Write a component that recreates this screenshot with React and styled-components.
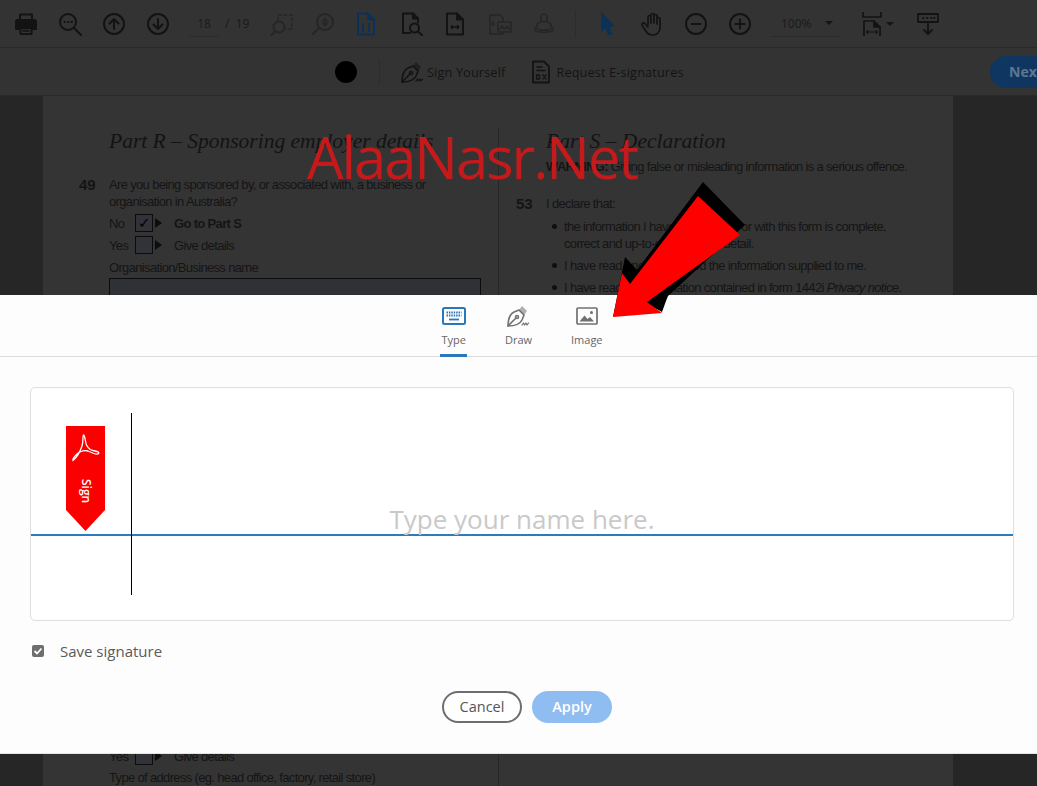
import React from "react"
import styled, { createGlobalStyle } from "styled-components"

const Global = createGlobalStyle`
  html, body { margin: 0; padding: 0; background: #262626; }
  * { box-sizing: border-box; }
`
const Screen = styled.div`
  position: relative;
  width: 1037px;
  height: 786px;
  overflow: hidden;
  display: flex;
  flex-direction: column;
  background: #262626;
  font-family: "Open Sans", "Liberation Sans", sans-serif;
`
const Toolbar = styled.div`
  height: 48px;
  flex: none;
  display: flex;
  align-items: center;
  padding-left: 4px;
  background: #333;
  border-bottom: 1px solid #2a2a2a;
  color: #111;
`
const Tool = styled.div`
  width: ${p => p.$w || 44}px;
  height: 32px;
  flex: none;
  display: flex;
  align-items: center;
  justify-content: center;
  color: ${p => p.$color || "#131313"};
  opacity: ${p => (p.$faded ? 0.4 : 1)};
`
const PageGroup = styled.div`
  width: 80px;
  flex: none;
  display: flex;
  align-items: center;
  padding-left: 9px;
  font-size: 12px;
  color: #1a1a1a;
`
const PageBox = styled.div`
  width: 30px;
  height: 26px;
  line-height: 26px;
  text-align: center;
  border-bottom: 1px solid #2b2b2b;
  margin-right: 6px;
`
const ToolSep = styled.div`
  width: 1px;
  height: 28px;
  margin: 0 10px 0 9px;
  background: #2c2c2c;
  flex: none;
`
const ZoomBox = styled.div`
  width: 70px;
  height: 27px;
  margin: 0 17px 0 9px;
  flex: none;
  display: flex;
  align-items: center;
  justify-content: space-between;
  padding-left: 10px;
  padding-right: 8px;
  font-size: 12px;
  color: #1a1a1a;
  border-bottom: 1px solid #2b2b2b;
`
const Caret = styled.span`
  width: 0;
  height: 0;
  border-left: 4px solid transparent;
  border-right: 4px solid transparent;
  border-top: 4px solid #151515;
  flex: none;
`
const SignBar = styled.div`
  height: 48px;
  flex: none;
  display: flex;
  align-items: center;
  padding-left: 335px;
  background: #333;
  border-bottom: 1px solid #2a2a2a;
  color: #131313;
  font-size: 12.7px;
`
const Dot = styled.div`
  width: 22px;
  height: 22px;
  border-radius: 50%;
  background: #000;
  flex: none;
`
const BarSep = styled.div`
  width: 1px;
  height: 26px;
  margin: 0 20px 0 22px;
  background: #2c2c2c;
  flex: none;
`
const BarAction = styled.div`
  display: flex;
  align-items: center;
  gap: 3px;
  margin-right: 24px;
  white-space: nowrap;
  letter-spacing: .15px;
`
const NextButton = styled.div`
  margin-left: auto;
  margin-right: -32px;
  width: 79px;
  height: 32px;
  line-height: 32px;
  padding-left: 19px;
  border-radius: 16px;
  background: #0f3660;
  color: #5f7690;
  font-weight: 700;
  font-size: 14px;
  flex: none;
`
const PageArea = styled.div`
  flex: 1;
  display: flex;
  padding-left: 43px;
  min-height: 0;
`
const Paper = styled.div`
  width: 910px;
  height: 100%;
  flex: none;
  background: #343434;
  display: grid;
  grid-template-columns: 456px 1fr;
  color: #141414;
  font-family: "Liberation Sans", sans-serif;
  font-size: 13px;
  letter-spacing: -.66px;
  line-height: 17px;
`
const LeftCol = styled.div`
  border-right: 1px solid #272727;
  margin-top: 32px;
  padding: 0 17px 0 66px;
`
const RightCol = styled.div`
  margin-top: 32px;
  padding: 0 0 0 47px;
`
const PartTitle = styled.div`
  font-family: "Liberation Serif", serif;
  font-style: italic;
  font-size: 21.5px;
  letter-spacing: 0;
  line-height: 26px;
  color: #131313;
  white-space: nowrap;
`
const Question = styled.div`
  position: relative;
  margin-top: ${p => p.$top || 0}px;
  white-space: nowrap;
`
const QNum = styled.b`
  position: absolute;
  left: ${p => p.$left}px;
  top: 0;
  font-size: 15px;
  letter-spacing: 0;
`
const ChoiceRow = styled.div`
  display: flex;
  align-items: center;
  height: 22px;
  margin-top: ${p => p.$top || 0}px;
  white-space: nowrap;
`
const ChoiceLabel = styled.span`
  width: 26px;
`
const CheckBox = styled.span`
  width: 18px;
  height: 18px;
  border: 1px solid #0c0c0c;
  background: #323338;
  display: flex;
  align-items: center;
  justify-content: center;
  font-size: 15px;
  color: #000;
  font-family: "DejaVu Sans", sans-serif;
`
const Play = styled.span`
  width: 0;
  height: 0;
  margin: 0 12px 0 2px;
  border-top: 5px solid transparent;
  border-bottom: 5px solid transparent;
  border-left: 7px solid #0d0d0d;
`
const Field = styled.div`
  height: 467px;
  margin-top: 2px;
  border: 1px solid #0c0c0c;
  background: #2f3136;
`
const Warning = styled.div`
  margin-top: 4px;
  white-space: nowrap;
`
const Bullets = styled.ul`
  list-style: none;
  margin: 6px 0 0;
  padding: 0 0 0 18px;
`
const BulletItem = styled.li`
  position: relative;
  margin-bottom: 5px;
  white-space: nowrap;
  &:before {
    content: "";
    position: absolute;
    left: -12px;
    top: 6px;
    width: 5px;
    height: 5px;
    border-radius: 50%;
    background: #0f0f0f;
  }
`
const Watermark = styled.div`
  position: absolute;
  left: 307px;
  top: 118px;
  font-size: 58px;
  line-height: 78px;
  color: #c41a1c;
  letter-spacing: -2.1px;
  white-space: nowrap;
`
const Dialog = styled.div`
  position: absolute;
  left: 0;
  right: 0;
  top: 295px;
  height: 459px;
  background: #fdfdfd;
  display: flex;
  flex-direction: column;
  border-bottom: 1px solid #e4e4e4;
`
const Tabs = styled.div`
  height: 62px;
  flex: none;
  display: flex;
  justify-content: center;
  gap: 37px;
  padding-left: 7px;
  border-bottom: 1px solid #dcdcdc;
`
const Tab = styled.div`
  height: 62px;
  padding: 9px 1px 0;
  min-width: 26px;
  display: flex;
  flex-direction: column;
  align-items: center;
  gap: 4px;
  font-size: 11px;
  line-height: 15px;
  color: ${p => (p.$active ? "#2a78bb" : "#707070")};
  border-bottom: 3px solid ${p => (p.$active ? "#2a78bb" : "transparent")};
`
const TabIcon = styled.span`
  height: 24px;
  display: flex;
  align-items: center;
  justify-content: center;
`
const TabLabel = styled.span`
  color: #666;
`
const DialogBody = styled.div`
  flex: 1;
  padding: 30px 23px 0 30px;
  display: flex;
  flex-direction: column;
`
const SignBox = styled.div`
  position: relative;
  height: 234px;
  flex: none;
  background: #fff;
  border: 1px solid #dedede;
  border-radius: 5px;
`
const TypeArea = styled.div`
  height: 148px;
  display: flex;
  align-items: flex-end;
  justify-content: center;
  border-bottom: 2px solid #2b7cbd;
  font-size: 26px;
  line-height: 32px;
  color: #c9c9c9;
`
const Placeholder = styled.span`
  margin-bottom: -1px;
`
const Caretline = styled.div`
  position: absolute;
  left: 100px;
  top: 25px;
  width: 1px;
  height: 182px;
  background: #000;
`
const SignTag = styled.div`
  position: absolute;
  left: 35px;
  top: 38px;
  width: 39px;
  height: 105px;
  background: #fa0000;
  clip-path: polygon(0 0, 100% 0, 100% 80%, 50% 100%, 0 80%);
  display: flex;
  flex-direction: column;
  align-items: center;
  padding-top: 8px;
  color: #fff;
`
const TagText = styled.span`
  writing-mode: vertical-rl;
  font-size: 12px;
  font-weight: 600;
  line-height: 14px;
  margin-top: 15px;
`
const SaveRow = styled.div`
  margin-top: 20px;
  display: flex;
  align-items: center;
  padding-left: 2px;
  height: 20px;
  font-size: 15px;
  color: #5a5a5a;
`
const SaveBox = styled.span`
  width: 12px;
  height: 12px;
  margin-right: 16px;
  border-radius: 2px;
  background: #6e6e6e;
  display: flex;
  align-items: center;
  justify-content: center;
`
const Buttons = styled.div`
  margin-top: 30px;
  display: flex;
  justify-content: center;
  gap: 10px;
  padding-left: 10px;
`
const PillButton = styled.div`
  width: 80px;
  height: 32px;
  border-radius: 16px;
  display: flex;
  align-items: center;
  justify-content: center;
  padding-bottom: 1px;
  font-size: 14.5px;
  font-weight: ${p => (p.$primary ? 600 : 400)};
  color: ${p => (p.$primary ? "#fff" : "#555")};
  background: ${p => (p.$primary ? "#8fbdf1" : "#fff")};
  border: 2px solid ${p => (p.$primary ? "#8fbdf1" : "#6e6e6e")};
`
const ArrowArt = styled.svg`
  position: absolute;
  left: 0;
  top: 0;
  pointer-events: none;
`

const Ico = ({ size = 24, children, fill = "none", sw = 2 }) => (
  <svg width={size} height={size} viewBox="0 0 24 24" fill={fill} stroke="currentColor" strokeWidth={sw} strokeLinecap="round" strokeLinejoin="round">
    {children}
  </svg>
)

const PrintIcon = () => (
  <Ico>
    <path d="M6 8V2.5h12V8" />
    <path d="M6 17H2V9.5a1.5 1.5 0 0 1 1.5-1.5h17A1.5 1.5 0 0 1 22 9.5V17h-4" fill="currentColor" />
    <path d="M6.5 13.5h11V22h-11z" />
    <path d="M9 16.5h6M9 19h6" strokeWidth="1.3" />
  </Ico>
)
const LensDots = () => (
  <Ico>
    <circle cx="10" cy="10" r="8" />
    <path d="M16 16l7 7" />
    <path d="M6.5 10h.5M10 10h.5M13.5 10h.5" />
  </Ico>
)
const Circled = ({ d }) => (
  <Ico>
    <circle cx="12" cy="12" r="10" />
    <path d={d} />
  </Ico>
)
const MarqueeZoom = () => (
  <Ico>
    <path d="M8 8V3h14v14h-6" strokeDasharray="3 2.5" strokeWidth="1.4" />
    <circle cx="9" cy="15" r="5.5" />
    <path d="M5 19.5L1.5 23" />
  </Ico>
)
const DynamicZoom = () => (
  <Ico>
    <circle cx="14" cy="10" r="8" />
    <path d="M8 16l-6 6" />
    <path d="M10.5 10h7M14 6.5l-2 2h4zM14 13.5l-2-2h4z" strokeWidth="1.2" />
  </Ico>
)
const ActualSize = () => (
  <Ico>
    <path d="M4 1.5h10l6 6v15H4z" />
    <path d="M14 1.5v6h6" fill="currentColor" />
    <path d="M9 12v7M15 12v7" />
  </Ico>
)
const FindPage = () => (
  <Ico>
    <path d="M11 21H4V1.5h10l5 5v4" />
    <path d="M14 1.5v5h5" fill="currentColor" />
    <circle cx="15.5" cy="16" r="4.5" />
    <path d="M19 19.5l4 3.5" />
  </Ico>
)
const FitWidth = () => (
  <Ico>
    <path d="M4 1.5h10l6 6v15H4z" />
    <path d="M14 1.5v6h6" fill="currentColor" />
    <path d="M8 15h8M8 15l1.5-1.5M8 15l1.5 1.5M16 15l-1.5-1.5M16 15l-1.5 1.5" strokeWidth="1.3" />
  </Ico>
)
const TwoPages = () => (
  <Ico sw={1.5}>
    <path d="M2 3h10l3 3v16H2z" />
    <path d="M10 10h13v10H10z" fill="#333" />
    <path d="M12 17l2-3 2 3M17 17l2-3 2 3M4 13l1-3 1 3" />
  </Ico>
)
const Stamp = () => (
  <Ico sw={1.6}>
    <path d="M9 9V5a3 3 0 0 1 6 0v4" />
    <path d="M6 11c2-2 10-2 12 0l3 7c0 3-18 3-18 0z" />
    <path d="M5 17c3 1.5 11 1.5 14 0" />
  </Ico>
)
const Pointer = () => (
  <Ico fill="currentColor" sw={1}>
    <path d="M6 1l12 13-5.5.4L16 22l-3.5 1-3-7.5L6 19z" />
  </Ico>
)
const Hand = () => (
  <Ico sw={1.7}>
    <path d="M8 13V5a1.5 1.5 0 0 1 3 0v6M11 11V3a1.5 1.5 0 0 1 3 0v8M14 11V4a1.5 1.5 0 0 1 3 0v8M17 12V7a1.5 1.5 0 0 1 3 0v9c0 4-3 7-7 7h-1c-3 0-5-2-6.5-4.5L2 13c-.7-1.3 1.5-2.8 2.7-1.5L8 15" />
  </Ico>
)
const FitPage = () => (
  <Ico sw={1.7}>
    <path d="M3 0v5h18V0" />
    <path d="M4 24V9h10l6 6v9" />
    <path d="M14 9v6h6" fill="currentColor" />
    <path d="M6.5 20h11M6.5 20l1.5-1.5M6.5 20l1.5 1.5M17.5 20l-1.5-1.5M17.5 20l-1.5 1.5" strokeWidth="1.1" />
  </Ico>
)
const RulerDown = () => (
  <Ico sw={1.8}>
    <path d="M2 2h20v8H2z" />
    <path d="M7 6h.5M11 6h.5M15 6h.5M18 6h.5" />
    <path d="M12 12v10M8 18l4 4 4-4" />
  </Ico>
)
const Pen = ({ size = 24 }) => (
  <Ico size={size} sw={1.6}>
    <path d="M2 22c0-6 2-12 6-14l5-2 5 5-2 5c-2 4-7 6-14 6z" />
    <path d="M2 22l8-8" />
    <circle cx="11" cy="13" r="1.5" />
    <path d="M13 6l3-4 5 5-3 4" fill="currentColor" stroke="none" opacity=".55" />
    <path d="M16 21l1.5-2 1 2 1.5-2 1 2 1.5-2" strokeWidth="1.2" />
  </Ico>
)
const Form = () => (
  <Ico sw={1.8}>
    <path d="M4 1.5h11l5 5v16H4z" />
    <path d="M8 7h5M8 10.5h8" strokeWidth="1.5" />
    <path d="M7.5 15h3v4h-3zM14 15l3 4M17 15l-3 4" strokeWidth="1.3" />
  </Ico>
)
const Keyboard = () => (
  <svg width="24" height="18" viewBox="0 0 24 18" fill="none">
    <rect x="1" y="1" width="22" height="16" rx="1.5" stroke="currentColor" strokeWidth="2" />
    <path d="M4.5 5.5h15M4.5 8.5h15" stroke="currentColor" strokeWidth="1.8" strokeDasharray="1.5 .9" />
    <path d="M7 12.5h10" stroke="currentColor" strokeWidth="1.8" />
  </svg>
)
const ImageIco = () => (
  <svg width="22" height="20" viewBox="0 0 22 20" fill="none">
    <rect x="1" y="2" width="20" height="16" rx="1" stroke="currentColor" strokeWidth="1.7" />
    <path d="M3.5 15.5l5-6 3 3.5 2.5-2 4 4.5z" fill="currentColor" />
    <circle cx="15.5" cy="6.5" r="1.5" fill="currentColor" />
  </svg>
)
const AcrobatLogo = () => (
  <svg width="30" height="30" viewBox="0 0 30 30" fill="none" stroke="#fff" strokeWidth="1.3">
    <path d="M2 26.5C5 24 9 18 11 12C12.500 8 11.500 1 12.500 1C14 1 14 7 15.500 11C17 14 20 16.500 24 17C27 17.500 28.500 18.500 27.500 19.500C26 21 21 19 17 17C13 16 8 18 5 21C3 23 1.500 25.500 2 26.500z" />
  </svg>
)
const ArrowShape = () => (
  <ArrowArt width="1037" height="786" viewBox="0 0 1037 786">
    <polygon fill="#000" points="625,257 637,270 703,182 745,225 668,296 666,301 662,312 640,300 613,317" />
    <polygon fill="#fe0000" points="613,317 622,273 630,284 698,196 740,235 647,302 662,313" />
  </ArrowArt>
)

export default function App() {
  return (
    <Screen>
      <Global />
      <Toolbar>
        <Tool><PrintIcon /></Tool>
        <Tool><LensDots /></Tool>
        <Tool><Circled d="M12 17V7M7.5 11.5L12 7l4.5 4.5" /></Tool>
        <Tool><Circled d="M12 7v10M7.5 12.5L12 17l4.5-4.5" /></Tool>
        <PageGroup><PageBox>18</PageBox>/&nbsp;&nbsp;19</PageGroup>
        <Tool $faded><MarqueeZoom /></Tool>
        <Tool $w={38} $faded><DynamicZoom /></Tool>
        <Tool $w={48} $color="#0c3157"><ActualSize /></Tool>
        <Tool $w={42}><FindPage /></Tool>
        <Tool $w={46}><FitWidth /></Tool>
        <Tool $faded><TwoPages /></Tool>
        <Tool $faded><Stamp /></Tool>
        <ToolSep />
        <Tool $color="#0c3157"><Pointer /></Tool>
        <Tool><Hand /></Tool>
        <Tool><Circled d="M7.5 12h9" /></Tool>
        <Tool><Circled d="M7.5 12h9M12 7.5v9" /></Tool>
        <ZoomBox>100%<Caret /></ZoomBox>
        <Tool $w={28}><FitPage /></Tool>
        <Caret />
        <Tool $w={68}><RulerDown /></Tool>
      </Toolbar>
      <SignBar>
        <Dot />
        <BarSep />
        <BarAction><Pen />Sign Yourself</BarAction>
        <BarAction><Form />Request E-signatures</BarAction>
        <NextButton>Next</NextButton>
      </SignBar>
      <PageArea>
        <Paper>
          <LeftCol>
            <PartTitle>Part R – Sponsoring employer details</PartTitle>
            <Question $top={22}>
              <QNum $left={-30}>49</QNum>
              Are you being sponsored by, or associated with, a business or<br />organisation in Australia?
            </Question>
            <ChoiceRow $top={2}><ChoiceLabel>No</ChoiceLabel><CheckBox>✓</CheckBox><Play /><b>Go to Part S</b></ChoiceRow>
            <ChoiceRow><ChoiceLabel>Yes</ChoiceLabel><CheckBox /><Play />Give details</ChoiceRow>
            <Question $top={3}>Organisation/Business name</Question>
            <Field />
            <ChoiceRow><ChoiceLabel>Yes</ChoiceLabel><CheckBox /><Play />Give details</ChoiceRow>
            <Question $top={2}>Type of address (eg. head office, factory, retail store)</Question>
          </LeftCol>
          <RightCol>
            <PartTitle>Part S – Declaration</PartTitle>
            <Warning><b>WARNING:</b> Giving false or misleading information is a serious offence.</Warning>
            <Question $top={20}>
              <QNum $left={-30}>53</QNum>
              I declare that:
            </Question>
            <Bullets>
              <BulletItem>the information I have provided on or with this form is complete,<br />correct and up-to-date in every detail.</BulletItem>
              <BulletItem>I have read and understood the information supplied to me.</BulletItem>
              <BulletItem>I have read the information contained in form 1442i <i>Privacy notice</i>.</BulletItem>
            </Bullets>
          </RightCol>
        </Paper>
      </PageArea>
      <Watermark>AlaaNasr.Net</Watermark>
      <Dialog>
        <Tabs>
          <Tab $active><TabIcon><Keyboard /></TabIcon><TabLabel>Type</TabLabel></Tab>
          <Tab><TabIcon><Pen /></TabIcon><TabLabel>Draw</TabLabel></Tab>
          <Tab><TabIcon><ImageIco /></TabIcon><TabLabel>Image</TabLabel></Tab>
        </Tabs>
        <DialogBody>
          <SignBox>
            <TypeArea><Placeholder>Type your name here.</Placeholder></TypeArea>
            <Caretline />
            <SignTag><AcrobatLogo /><TagText>Sign</TagText></SignTag>
          </SignBox>
          <SaveRow>
            <SaveBox>
              <svg width="10" height="10" viewBox="0 0 10 10" fill="none" stroke="#fff" strokeWidth="1.8"><path d="M1.5 5l2.5 2.5 4.5-5" /></svg>
            </SaveBox>
            Save signature
          </SaveRow>
          <Buttons>
            <PillButton>Cancel</PillButton>
            <PillButton $primary>Apply</PillButton>
          </Buttons>
        </DialogBody>
      </Dialog>
      <ArrowShape />
    </Screen>
  )
}
